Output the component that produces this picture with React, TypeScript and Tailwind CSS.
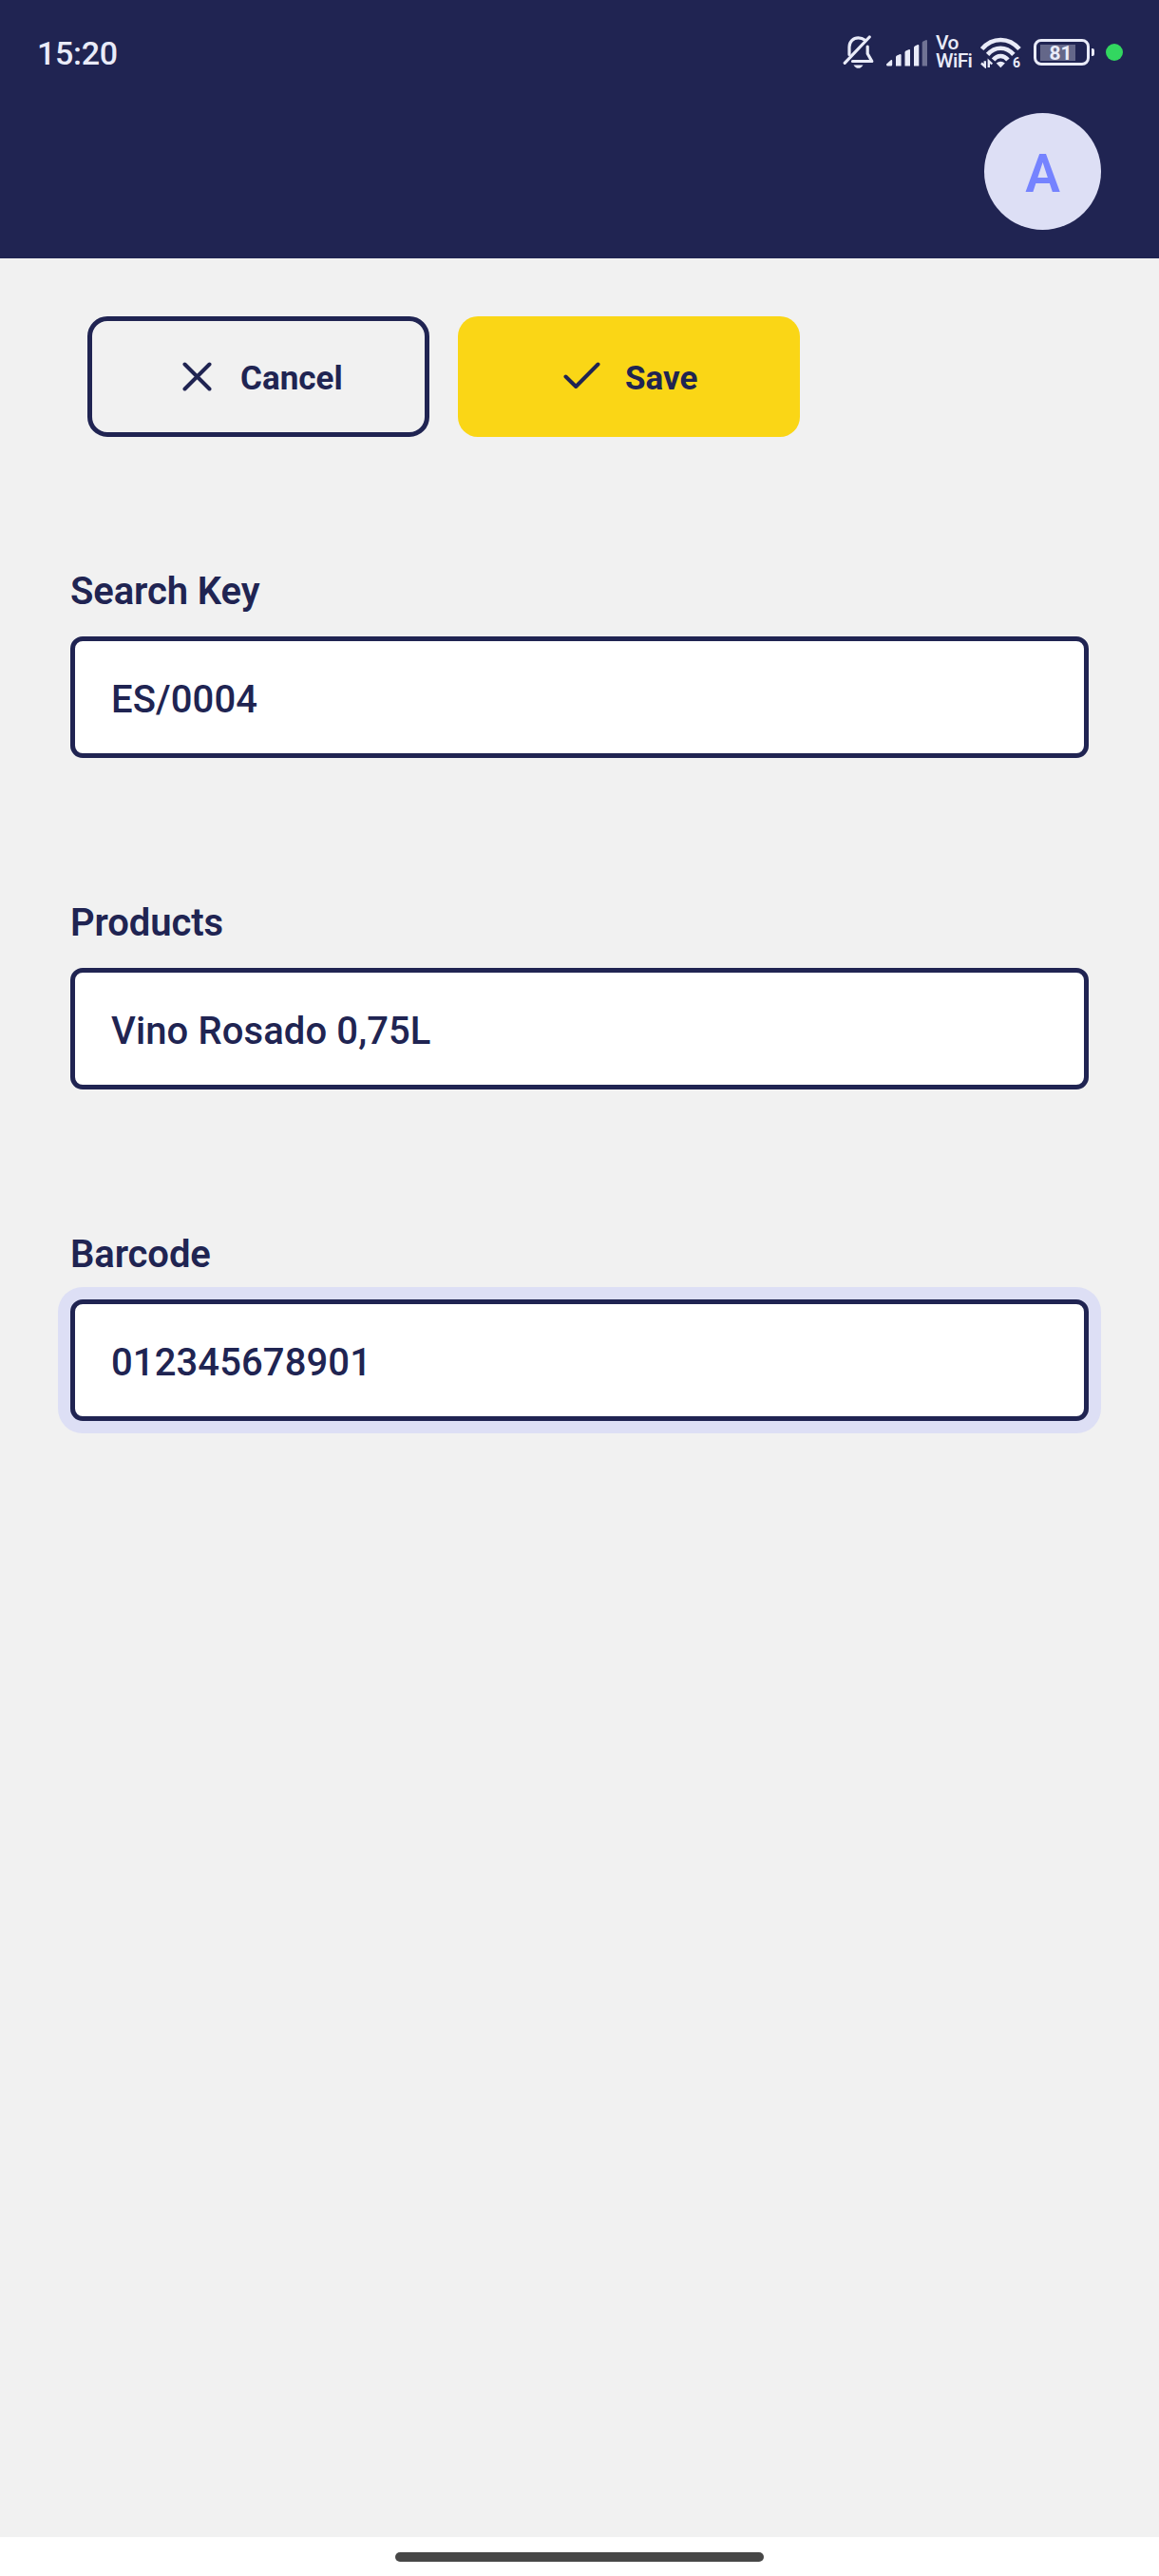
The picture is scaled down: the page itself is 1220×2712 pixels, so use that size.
import type { ReactNode } from "react";

function BellOffIcon() {
  return (
    <svg width="34" height="36" viewBox="0 0 34 36" fill="none" stroke="#e9ebf8" strokeWidth="3.2" strokeLinejoin="round">
      <path d="M23.500 5.200C21.500 3.600 19 2.800 16.500 2.800C11 2.800 7 7 7 12.500V20.500" strokeLinecap="round" />
      <path d="M26.200 12V19.500L30.800 27.500H10.500" strokeLinecap="round" />
      <path d="M2.200 29.300L28.200 2" strokeLinecap="round" />
      <path d="M11.500 31.500H21.500C20 34 18.500 34.800 16.500 34.800S13 34 11.500 31.500Z" fill="#e9ebf8" stroke="none" />
    </svg>
  );
}

function SignalIcon() {
  return (
    <svg width="43" height="28" viewBox="0 0 43 28" fill="#e9ebf8">
      <path d="M0 25.500L5 21Q6.200 20.500 6.200 22V26Q6.200 27.500 5 27.500H1Q0 27.500 0 25.500Z" />
      <path d="M10 18Q10 17 11 16.500L14.500 15Q15.600 14.800 15.600 16V27.500H10Z" />
      <path d="M19.500 13Q19.500 12 20.500 11.500L24 10Q25 9.800 25 11V27.500H19.500Z" />
      <path d="M29 8Q29 7 30 6.500L33 5Q34.300 4.800 34.300 6V27.500H29Z" />
      <path d="M37.700 3Q37.700 2 38.700 1.500L42 0Q43 0 43 1V27.500H37.700Z" opacity="0.4" />
    </svg>
  );
}

function WifiIcon() {
  return (
    <svg width="43" height="33" viewBox="0 0 43 33" fill="none" stroke="#e9ebf8" strokeWidth="4.600">
      <path d="M1.600 12.600C12.500-0.300 30-0.300 41 12.600" />
      <path d="M7.600 18.400C15.500 9.500 27 9.500 34.900 18.400" />
      <path d="M13.600 24C18 18.600 24.500 18.600 28.900 24" />
      <path d="M16.700 27.500Q21.300 23.800 25.900 27.500L21.300 32.300Z" fill="#e9ebf8" stroke="none" />
      <path d="M1 27.500L4.800 31V25.200M12.300 28.500L8.800 25.200V32" strokeWidth="2.400" />
    </svg>
  );
}

function StatusBar() {
  return (
    <div className="flex h-[110px] items-center justify-between pr-[38px] pl-[39px] text-[#e9ebf8]">
      <span className="mt-[2px] text-[34px] leading-10 font-medium tracking-[-0.3px]">15:20</span>
      <div className="flex items-center">
        <BellOffIcon />
        <span className="mt-[1px] ml-[12px] block"><SignalIcon /></span>
        <span className="ml-[9px] block w-[39px] text-[21px] leading-[19px] font-medium tracking-[-0.6px]">Vo WiFi</span>
        <span className="relative ml-[8px] block">
          <WifiIcon />
          <span className="absolute right-[1px] -bottom-[2px] text-[14px] leading-4 font-bold">6</span>
        </span>
        <div className="ml-[13px] flex items-center gap-[2px]">
          <div className="flex h-[28px] w-[59px] items-center rounded-[8px] border-[3px] border-[#e9ebf8] px-1">
            <div className="flex h-[17px] w-[37px] items-center justify-center bg-[#646789] pt-[2px] pl-[6px]">
              <span className="text-[21px] leading-none font-bold">81</span>
            </div>
          </div>
          <div className="h-2 w-[3px] rounded-r-[2px] bg-[#e9ebf8]" />
        </div>
        <div className="ml-[12px] size-[18px] rounded-full bg-[#32d760]" />
      </div>
    </div>
  );
}

function Button({ className, icon, children }: { className: string; icon: ReactNode; children: ReactNode }) {
  return (
    <button className={`flex h-[127px] w-[360px] items-center rounded-[21px] text-[35px] font-bold ${className}`}>
      {icon}
      <span className="pt-[4px] leading-10">{children}</span>
    </button>
  );
}

function Field({ label, value, focused = false }: { label: string; value: string; focused?: boolean }) {
  return (
    <div>
      <div className="mb-[23px] pt-px text-[40px] leading-[48px] font-semibold tracking-[-0.1px]">{label}</div>
      <div
        className={`flex h-[128px] items-center rounded-[13px] border-[5px] border-[#202452] bg-white pt-[6px] pl-[38px] text-[40px] ${
          focused ? "shadow-[0_0_0_13px_#dddff5]" : ""
        }`}
      >
        <span className="font-medium tracking-[0.1px]">{value}</span>
      </div>
    </div>
  );
}

export default function App() {
  return (
    <div className="flex h-[2712px] w-[1220px] flex-col bg-[#f1f1f1] font-[Roboto,sans-serif] text-[#202452]">
      <header className="h-[272px] bg-[#202452]">
        <StatusBar />
        <div className="mt-[9px] flex justify-end pr-[61px]">
          <div className="flex size-[123px] items-center justify-center rounded-full bg-[#dddff5] pt-[5px] text-[55px] font-semibold text-[#7583ff]">
            A
          </div>
        </div>
      </header>

      <main className="flex-1">
        <div className="flex gap-[30px] pt-[61px] pl-[92px]">
          <Button
            className="border-[5px] border-[#202452] pl-[95px]"
            icon={
              <svg className="mr-[30px]" width="31" height="31" viewBox="0 0 31 31" fill="none" stroke="#202452" strokeWidth="4" strokeLinecap="round">
                <path d="M2.500 2.500L28.500 28.500M28.500 2.500L2.500 28.500" />
              </svg>
            }
          >
            Cancel
          </Button>
          <Button
            className="bg-[#fad616] pl-[111px]"
            icon={
              <svg className="mr-[26px]" width="39" height="31" viewBox="0 0 39 31" fill="none" stroke="#202452" strokeWidth="4" strokeLinecap="round" strokeLinejoin="round">
                <path d="M2.500 15.500L13.200 26L36.500 2.500" />
              </svg>
            }
          >
            Save
          </Button>
        </div>

        <div className="flex flex-col gap-[149px] pt-[138px] pr-[74px] pl-[74px]">
          <Field label="Search Key" value="ES/0004" />
          <Field label="Products" value="Vino Rosado 0,75L" />
          <Field label="Barcode" value="012345678901" focused />
        </div>
      </main>

      <footer className="flex h-[41px] justify-center bg-white pt-4">
        <div className="h-[10px] w-[388px] rounded-full bg-[#474747]" />
      </footer>
    </div>
  );
}
